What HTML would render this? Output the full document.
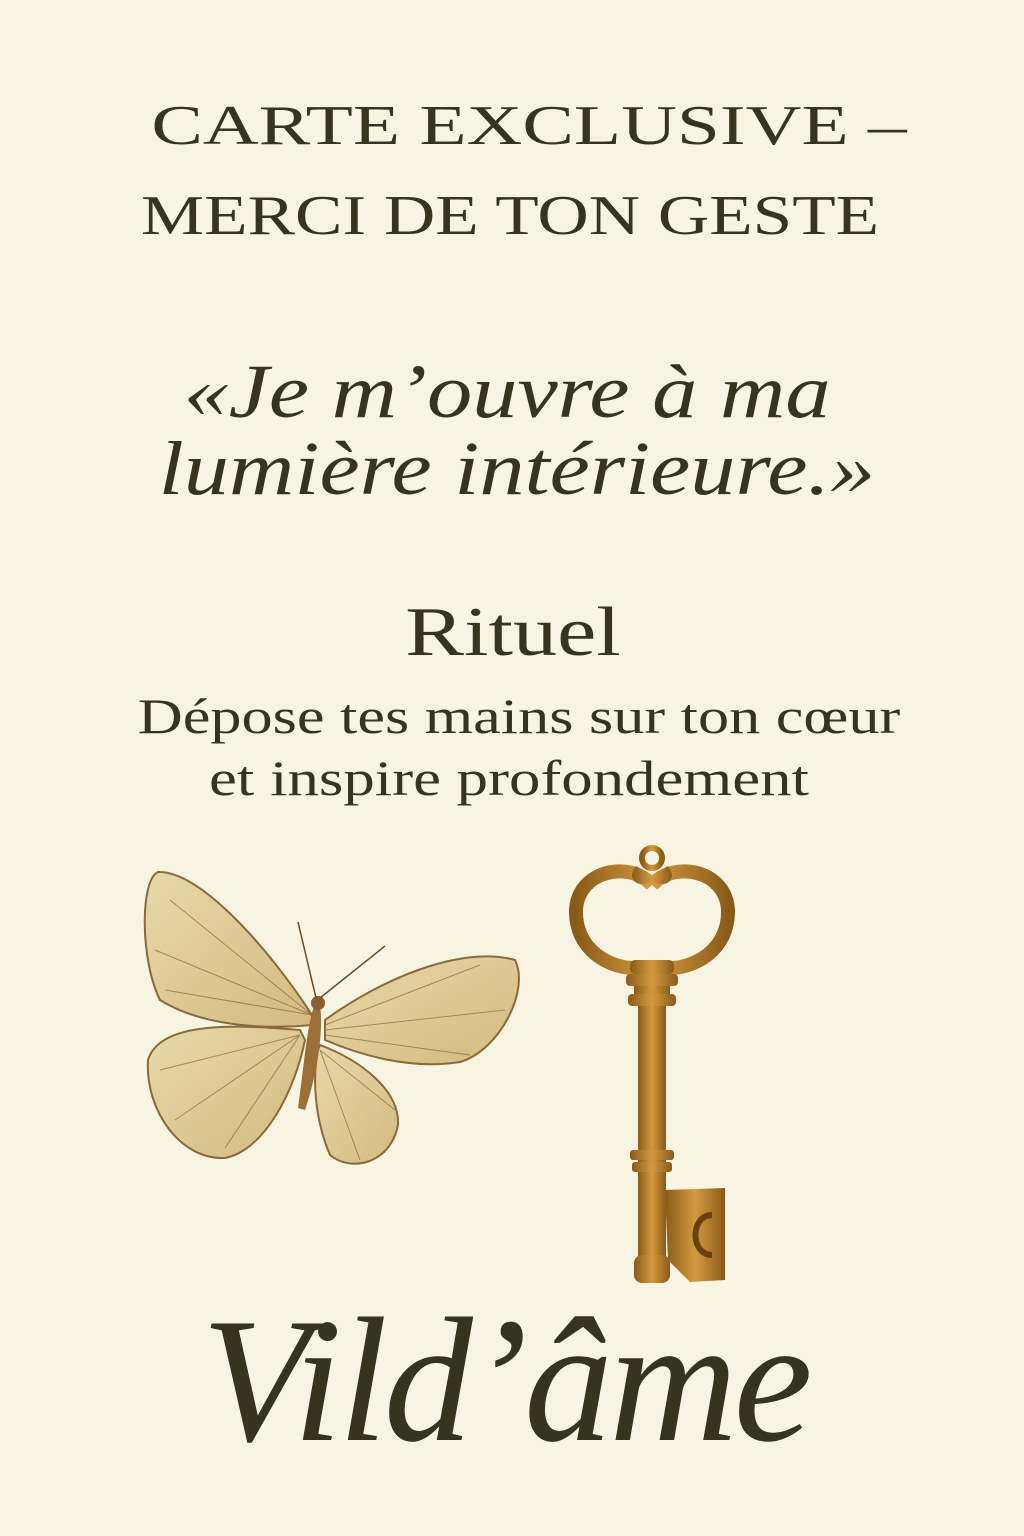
<!DOCTYPE html>
<html><head><meta charset="utf-8"><style>
html,body{margin:0;padding:0}
body{width:1024px;height:1536px;background:#f8f4e3;position:relative;overflow:hidden;font-family:"Liberation Serif",serif;color:#38331f}
.t{position:absolute;white-space:nowrap;line-height:1;transform-origin:center}
</style></head><body>
<div class="t" style="left:529px;top:98px;font-size:56px;transform:translateX(-50%) scaleX(1.38);">CARTE EXCLUSIVE –</div>
<div class="t" style="left:510px;top:188px;font-size:56px;transform:translateX(-50%) scaleX(1.27);">MERCI DE TON GESTE</div>
<div class="t" style="left:507px;top:354px;font-size:76px;font-style:italic;transform:translateX(-50%) scaleX(1.19);">«Je m’ouvre à ma</div>
<div class="t" style="left:517px;top:431px;font-size:76px;font-style:italic;transform:translateX(-50%) scaleX(1.19);">lumière intérieure.»</div>
<div class="t" style="left:513px;top:598px;font-size:70px;transform:translateX(-50%) scaleX(1.26);">Rituel</div>
<div class="t" style="left:519px;top:691px;font-size:50px;transform:translateX(-50%) scaleX(1.245);">Dépose tes mains sur ton cœur</div>
<div class="t" style="left:509px;top:753px;font-size:50px;transform:translateX(-50%) scaleX(1.256);">et inspire profondement</div>
<div class="t" style="left:505px;top:1291px;font-size:178px;font-style:italic;letter-spacing:-4px;transform:translateX(-50%);">Vild’âme</div>
<svg width="1024" height="1536" style="position:absolute;left:0;top:0">
<defs>
<linearGradient id="w" x1="0" y1="0" x2="1" y2="1"><stop offset="0" stop-color="#e8d8a8"/><stop offset="1" stop-color="#d4bb80"/></linearGradient>
<linearGradient id="g" x1="0" y1="0" x2="1" y2="0"><stop offset="0" stop-color="#8a5a18"/><stop offset=".5" stop-color="#d49a40"/><stop offset="1" stop-color="#8a5a18"/></linearGradient>
</defs>
<g fill="url(#w)" stroke="#8a6a3a" stroke-width="2">
<path d="M312 1015 C270 950 200 870 158 872 C140 880 140 960 160 1000 C200 1025 260 1030 312 1025Z"/>
<path d="M300 1030 C240 1025 160 1020 148 1060 C145 1110 180 1160 225 1158 C265 1150 295 1090 305 1040Z"/>
<path d="M325 1020 C380 980 460 945 515 960 C530 990 500 1050 460 1062 C410 1070 360 1055 325 1040Z"/>
<path d="M320 1045 C360 1060 400 1090 398 1125 C390 1165 350 1172 330 1155 C315 1120 312 1080 318 1050Z"/>
</g>
<g stroke="#8a6a3a" stroke-width="1" fill="none" opacity=".7">
<path d="M312 1015 L170 900 M312 1015 L155 950 M312 1015 L165 990 M300 1035 L160 1070 M300 1035 L175 1120 M300 1035 L225 1148 M325 1025 L480 965 M325 1030 L505 1010 M325 1035 L470 1055 M320 1050 L395 1110 M320 1050 L360 1160"/>
</g>
<path d="M318 1000 C324 1010 322 1060 305 1110 L298 1108 C305 1060 308 1010 318 1000Z" fill="#9a7038"/>
<circle cx="318" cy="1003" r="7" fill="#8a6030"/>
<path d="M316 998 L298 922 M320 998 L385 946" stroke="#6a4a20" stroke-width="1.5" fill="none"/>
<g fill="none" stroke="url(#g)">
<path d="M652 885 C630 860 578 870 576 910 C575 950 610 970 640 968 M652 885 C674 860 726 870 728 910 C729 950 694 970 664 968" stroke-width="14"/>
<circle cx="652" cy="858" r="10" stroke-width="6"/>
</g>
<g fill="url(#g)">
<path d="M636 866 C625 880 640 890 652 880 C664 890 679 880 668 866 L652 875Z"/>
<rect x="630" y="960" width="44" height="14" rx="5"/>
<rect x="626" y="974" width="52" height="12" rx="4"/>
<rect x="634" y="986" width="36" height="8"/>
<rect x="628" y="994" width="48" height="12" rx="4"/>
<rect x="638" y="1006" width="28" height="250"/>
<rect x="630" y="1150" width="44" height="10" rx="3"/>
<rect x="632" y="1162" width="40" height="10" rx="3"/>
<rect x="634" y="1255" width="36" height="28" rx="8"/>
<path d="M665 1190 L725 1188 L725 1280 L690 1282 L668 1260Z"/>
</g>
<path d="M712 1215 C690 1215 690 1255 712 1255" stroke="#6a4010" stroke-width="6" fill="none"/>
</svg>
</body></html>
